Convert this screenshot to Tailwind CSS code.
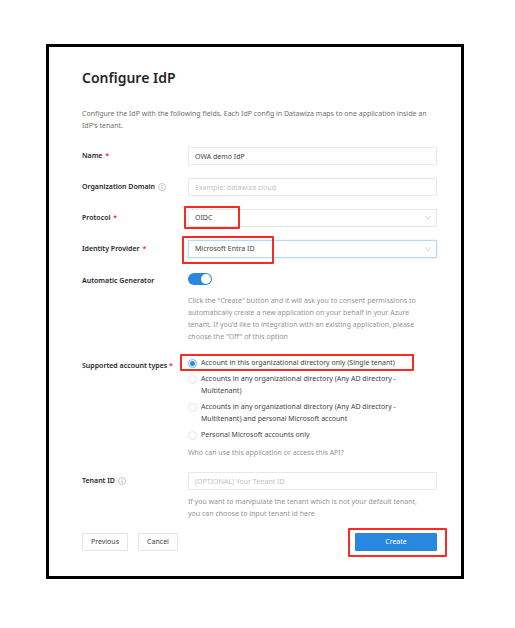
<!DOCTYPE html>
<html lang="en">
<head>
<meta charset="utf-8">
<meta name="viewport" content="width=device-width, initial-scale=1">
<title>Configure IdP</title>
<script src="https://cdn.jsdelivr.net/npm/@tailwindcss/browser@4"></script>
</head>
<body class="bg-white px-[46px] pt-[44px] pb-[49px] pr-[51px] font-['Noto_Sans','Open_Sans',sans-serif] text-[7px] leading-[12px] text-[#444]">
<main class="border-[3px] border-black pt-[21px] pr-[24px] pb-[25px] pl-[33px]">
  <h1 class="text-[14px] leading-[20px] font-semibold text-[#262626]">Configure IdP</h1>
  <p class="mt-[20px] text-[#707070]">Configure the IdP with the following fields. Each IdP config in Datawiza maps to one application inside an IdP's tenant.</p>

  <form class="mt-[15px]">
    <div class="grid grid-cols-[106px_1fr] gap-y-[13px]">
      <label for="name" class="self-center font-semibold text-[#262626]">Name <span class="ml-px text-[#f5222d]">*</span></label>
      <input id="name" type="text" value="OWA demo IdP" class="h-[18px] w-full min-w-0 rounded-[1px] border border-[#e8e8e8] px-[6px] outline-none">

      <div class="flex items-center gap-[3px] self-center">
        <label for="domain" class="font-semibold text-[#262626]">Organization Domain</label>
        <svg class="size-[8px] text-[#8c8c8c]" viewBox="0 0 16 16" fill="none" stroke="currentColor" aria-hidden="true"><circle cx="8" cy="8" r="7"/><path d="M8 7v5M8 4v1.5" stroke-width="1.4"/></svg>
      </div>
      <input id="domain" type="text" placeholder="Example: datawiza.cloud" class="h-[18px] w-full min-w-0 rounded-[1px] border border-[#e8e8e8] px-[6px] outline-none placeholder:text-[#bfbfbf]">

      <label for="protocol" class="self-center font-semibold text-[#262626]">Protocol <span class="ml-px text-[#f5222d]">*</span></label>
      <div class="relative h-[18px]">
        <select id="protocol" class="block h-[18px] w-full appearance-none rounded-[1px] border border-[#e8e8e8] bg-white px-[6px] outline-none"><option>OIDC</option></select>
        <svg class="pointer-events-none absolute top-[6px] right-[6px] size-[6px]" viewBox="0 0 14 14" fill="none" stroke="#bfbfbf" stroke-width="1.5" aria-hidden="true"><path d="M1 2.500l6 8 6-8"/></svg>
        <span class="pointer-events-none absolute -top-[3px] -left-[4px] h-[23px] w-[56px] rounded-[1px] border-2 border-[#fb2a20]"></span>
      </div>

      <label for="provider" class="self-center font-semibold text-[#262626]">Identity Provider <span class="ml-px text-[#f5222d]">*</span></label>
      <div class="relative h-[18px]">
        <select id="provider" class="block h-[18px] w-full appearance-none rounded-[1px] border border-[#b5d8f7] bg-white px-[6px] shadow-[0_0_0_1px_#eef7fe] outline-none"><option>Microsoft Entra ID</option></select>
        <svg class="pointer-events-none absolute top-[6px] right-[6px] size-[6px]" viewBox="0 0 14 14" fill="none" stroke="#bfbfbf" stroke-width="1.5" aria-hidden="true"><path d="M1 2.500l6 8 6-8"/></svg>
        <span class="pointer-events-none absolute -top-[4px] -left-[6px] h-[28px] w-[92px] rounded-[1px] border-2 border-[#fb2a20]"></span>
      </div>

      <label for="generator" class="pt-[4px] font-semibold text-[#262626]">Automatic Generator</label>
      <div class="pt-[2px]">
        <input id="generator" type="checkbox" role="switch" checked class="block h-[12px] w-[24px] appearance-none rounded-full bg-[#2a87e0] before:ml-[13px] before:mt-px before:block before:size-[10px] before:rounded-full before:bg-white">
        <p class="mt-[10px] text-[#949494]">Click the "Create" button and it will ask you to consent permissions to<br>automatically create a new application on your behalf in your Azure<br>tenant. If you'd like to integration with an existing application, please<br>choose the "Off" of this option</p>
      </div>

      <div id="types" class="pt-[4px] font-semibold text-[#262626]">Supported account types <span class="text-[#f5222d]">*</span></div>
      <div class="pt-px" role="radiogroup" aria-labelledby="types">
        <div class="flex flex-col gap-[4px]">
          <label class="relative flex gap-[4px]">
            <input type="radio" name="type" checked class="mt-[2px] size-[9px] shrink-0 appearance-none rounded-full border border-[#6db3f2] bg-white before:m-px before:block before:size-[5px] before:rounded-full before:bg-[#2a87e0]">
            <span>Account in this organizational directory only (Single tenant)</span>
            <span class="pointer-events-none absolute -top-[3px] -left-[8px] h-[17px] w-[234px] rounded-[1px] border-2 border-[#fb2a20]"></span>
          </label>
          <label class="flex gap-[4px]">
            <input type="radio" name="type" class="mt-[2px] size-[9px] shrink-0 appearance-none rounded-full border border-[#e4e4e4] bg-white">
            <span>Accounts in any organizational directory (Any AD directory -<br>Multitenant)</span>
          </label>
          <label class="flex gap-[4px]">
            <input type="radio" name="type" class="mt-[2px] size-[9px] shrink-0 appearance-none rounded-full border border-[#e4e4e4] bg-white">
            <span>Accounts in any organizational directory (Any AD directory -<br>Multitenant) and personal Microsoft account</span>
          </label>
          <label class="flex gap-[4px]">
            <input type="radio" name="type" class="mt-[2px] size-[9px] shrink-0 appearance-none rounded-full border border-[#e4e4e4] bg-white">
            <span>Personal Microsoft accounts only</span>
          </label>
        </div>
        <p class="mt-[6px] text-[#949494]">Who can use this application or access this API?</p>
      </div>

      <div class="flex h-[18px] items-center gap-[3px]">
        <label for="tenant" class="font-semibold text-[#262626]">Tenant ID</label>
        <svg class="size-[8px] text-[#8c8c8c]" viewBox="0 0 16 16" fill="none" stroke="currentColor" aria-hidden="true"><circle cx="8" cy="8" r="7"/><path d="M8 7v5M8 4v1.5" stroke-width="1.4"/></svg>
      </div>
      <div>
        <input id="tenant" type="text" placeholder="(OPTIONAL) Your Tenant ID" class="block h-[18px] w-full min-w-0 rounded-[1px] border border-[#e8e8e8] px-[6px] outline-none placeholder:text-[#bfbfbf]">
        <p class="mt-[6px] text-[#949494]">If you want to manipulate the tenant which is not your default tenant,<br>you can choose to input tenant id here</p>
      </div>
    </div>

    <div class="mt-[13px] flex gap-[10px]">
      <button type="button" class="h-[18px] w-[46px] rounded-[1px] border border-[#e4e4e4] leading-[16px]">Previous</button>
      <button type="button" class="h-[18px] w-[40px] rounded-[1px] border border-[#e4e4e4] leading-[16px]">Cancel</button>
      <div class="relative ml-auto">
        <button type="submit" class="block h-[18px] w-[82px] rounded-[1px] bg-[#2a87e0] text-white">Create</button>
        <span class="pointer-events-none absolute -top-[5px] -left-[7px] h-[29px] w-[99px] rounded-[1px] border-2 border-[#fb2a20]"></span>
      </div>
    </div>
  </form>
</main>
</body>
</html>
